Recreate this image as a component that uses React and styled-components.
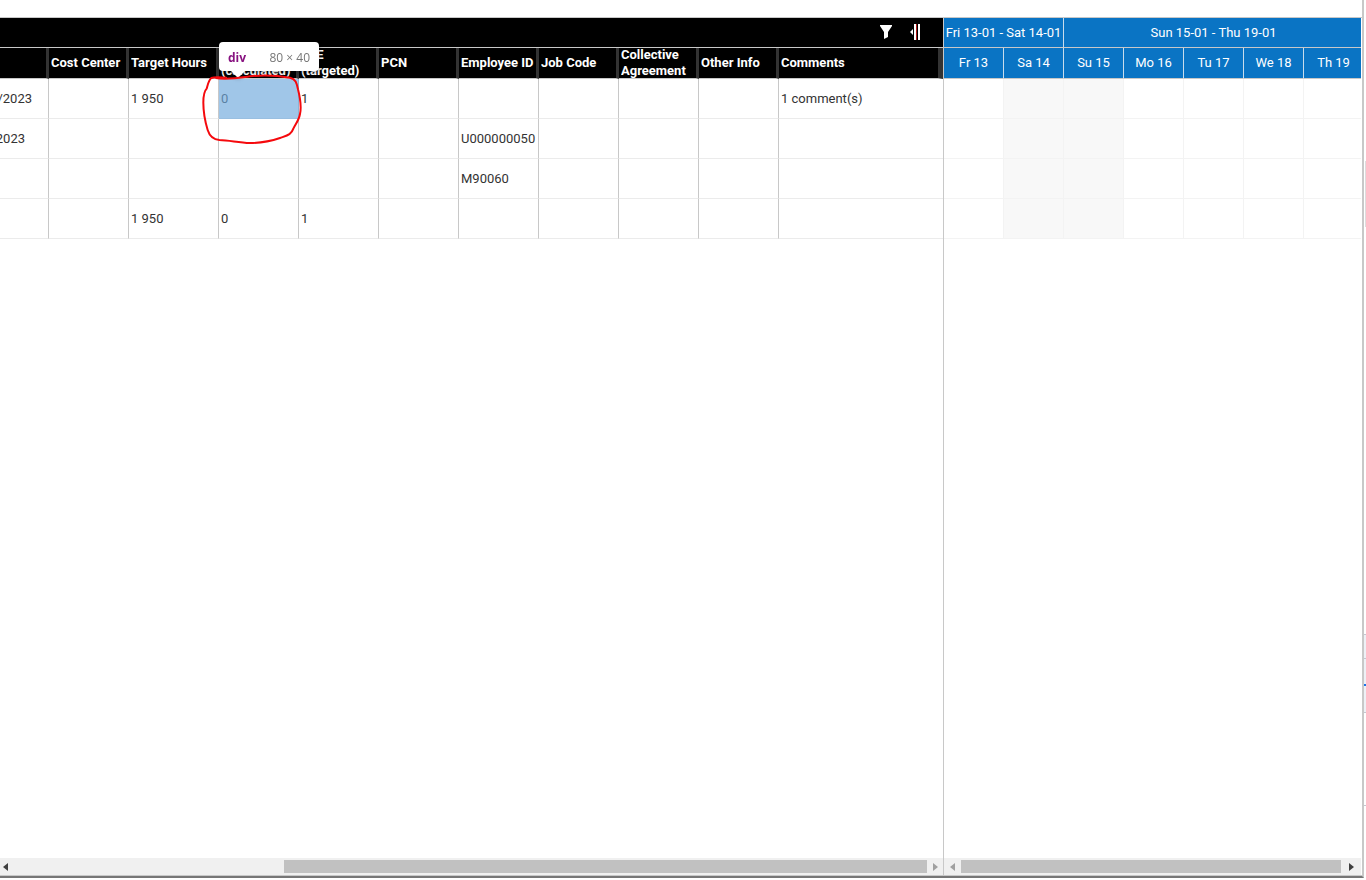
import styled, { createGlobalStyle } from 'styled-components';

const GlobalStyle = createGlobalStyle`
  * {
    box-sizing: border-box;
  }

  body {
    margin: 0;
    background: #fff;
    color: #333;
    font-family: Roboto, "Liberation Sans", sans-serif;
    font-size: 13px;
    line-height: 16px;
  }
`;

const Page = styled.div`
  display: flex;
  height: 100vh;
  padding-bottom: 2px;
  overflow: hidden;
`;

const Main = styled.main`
  flex: 1;
  min-width: 0;
  display: flex;
  flex-direction: column;
  border-right: 2px solid #c8c8c8;
  border-bottom: 2px solid #767676;
`;

const TopGap = styled.div`
  flex: none;
  height: 18px;
  border-bottom: 1px solid #c8c8c8;
`;

const Panes = styled.div`
  flex: 1;
  min-height: 0;
  display: flex;
  padding-right: 1px;
  border-bottom: 1px solid #c8c8c8;
`;

const Pane = styled.section`
  flex: ${({ $width }) => ($width ? `0 0 ${$width}px` : '1')};
  min-width: 0;
  display: flex;
  flex-direction: column;
  overflow: hidden;
  border-right: ${({ $width }) => ($width ? '1px solid #c8c8c8' : 'none')};
`;

const PaneBody = styled.div`
  flex: 1;
  min-height: 0;
`;

const Toolbar = styled.div`
  flex: none;
  display: flex;
  align-items: center;
  justify-content: flex-end;
  gap: 16px;
  height: 30px;
  padding: 0 22px 1px 0;
  background: #000;
  border-bottom: 1px solid #c8c8c8;
`;

const IconButton = styled.button`
  display: flex;
  padding: 0;
  border: none;
  background: none;
  cursor: pointer;
`;

const Table = styled.table`
  width: ${({ $width }) => $width || '100%'};
  table-layout: fixed;
  border-collapse: separate;
  border-spacing: 0;
`;

const HeadCell = styled.th`
  height: 31px;
  padding: 0 0 0 2px;
  background: #000;
  border-right: ${({ $last }) => ($last ? 5 : 3)}px solid #333;
  border-bottom: 1px solid #c8c8c8;
  color: #fff;
  font-weight: 700;
  text-align: left;
`;

const HeadText = styled.div`
  display: flex;
  flex-direction: column;
  justify-content: center;
  height: 30px;
  overflow: hidden;
  white-space: nowrap;

  span {
    flex: none;
  }
`;

const Cell = styled.td`
  position: relative;
  height: 40px;
  padding: 0 0 0 2px;
  border-right: ${({ $last }) => ($last ? 'none' : '1px solid #c8c8c8')};
  border-bottom: 1px solid #ebebeb;
  white-space: nowrap;
`;

const EndText = styled.div`
  display: flex;
  justify-content: flex-end;
  width: ${({ $width }) => $width}px;
  margin-left: -2px;
  overflow: hidden;
`;

const Highlight = styled.div`
  position: absolute;
  top: 0;
  left: 0;
  width: 80px;
  height: 40px;
  background: rgba(111, 168, 220, 0.66);
`;

const SizeTip = styled.div`
  position: absolute;
  bottom: 47px;
  left: 0;
  display: flex;
  align-items: center;
  justify-content: space-between;
  width: 100px;
  height: 29px;
  padding: 2px 9px 0;
  border-radius: 4px;
  background: #fff;
  color: #777;
  font-family: "Open Sans", sans-serif;
  font-size: 12px;
  filter: drop-shadow(0 1px 2px rgba(0, 0, 0, 0.35));

  strong {
    color: #881280;
  }

  &::after {
    content: '';
    position: absolute;
    top: 29px;
    left: 12px;
    border: 7px solid transparent;
    border-top-color: #fff;
    border-bottom: none;
  }
`;

const Scribble = styled.svg`
  position: absolute;
  top: -5px;
  left: -17px;
  z-index: 1;
`;

const RangeCell = styled.th`
  height: 30px;
  padding: 0;
  overflow: hidden;
  background: #0a74c4;
  border-right: 1px solid #c8dcec;
  border-bottom: 1px solid #c8c8c8;
  color: #fff;
  font-weight: 400;
  white-space: nowrap;
`;

const DayCell = styled(RangeCell)`
  height: 31px;
`;

const SlotCell = styled.td`
  height: 40px;
  padding: 0;
  background: ${({ $weekend }) => ($weekend ? '#f8f8f8' : '#fff')};
  border-right: 1px solid #f3f3f3;
  border-bottom: 1px solid #f3f3f3;
`;

const ScrollBar = styled.div`
  flex: none;
  display: flex;
  height: 17px;
  background: #f0f0f0;
`;

const ScrollButton = styled.button`
  flex: none;
  display: flex;
  align-items: center;
  justify-content: center;
  width: ${({ $width }) => $width || 17}px;
  padding: 0;
  border: none;
  background: none;
  color: ${({ $muted }) => ($muted ? '#a0a0a0' : '#404040')};
`;

const Track = styled.div`
  flex: 1;
  display: flex;
  justify-content: flex-end;
  padding: 2px 0;
`;

const Thumb = styled.div`
  width: ${({ $size }) => $size};
  background: #c1c1c1;
`;

const Edge = styled.aside`
  flex: none;
  width: 2px;
  display: flex;
  flex-direction: column;
`;

const EdgePart = styled.div`
  flex: none;
  height: ${({ $height }) => $height}px;
  background: ${({ $fill }) => $fill || '#fff'};
  border-right: ${({ $side }) => ($side ? '1px solid #ddd' : 'none')};
  border-bottom: ${({ $line }) => ($line ? '1px solid #c4c7d0' : 'none')};
`;

const columns = [
  { width: 49, title: [] },
  { width: 80, title: ['Cost Center'] },
  { width: 90, title: ['Target Hours'] },
  { width: 80, title: ['FTE', '(calculated)'] },
  { width: 80, title: ['FTE', '(targeted)'] },
  { width: 80, title: ['PCN'] },
  { width: 80, title: ['Employee ID'] },
  { width: 80, title: ['Job Code'] },
  { width: 80, title: ['Collective', 'Agreement'] },
  { width: 80, title: ['Other Info'] },
  { width: 164, title: ['Comments'] },
];

const rows = [
  ['/2023', '', '1 950', '0', '1', '', '', '', '', '', '1 comment(s)'],
  ['2023', '', '', '', '', '', 'U000000050', '', '', '', ''],
  ['', '', '', '', '', '', 'M90060', '', '', '', ''],
  ['', '', '1 950', '0', '1', '', '', '', '', '', ''],
];

// visible width of the date column text, which is scrolled off to the left
const dateWidths = [32, 25, 0, 0];

const days = ['Fr 13', 'Sa 14', 'Su 15', 'Mo 16', 'Tu 17', 'We 18', 'Th 19'];

const FilterIcon = () => (
  <svg width="14" height="16" viewBox="0 0 14 16" aria-hidden="true">
    <path d="M1 1h12v1L9 8v5l-4 2V8L1 2z" fill="#fff" />
  </svg>
);

const CollapseIcon = () => (
  <svg width="12" height="18" viewBox="0 0 12 18" aria-hidden="true">
    <path d="M4 6v6L1 9z" fill="#fff" />
    <path d="M5 1h2v16H5zM9 1h2v16H9z" fill="#fff" />
    <path d="M7 1h1v16H7z" fill="#b01818" />
  </svg>
);

const Arrow = ({ left }) => (
  <svg width="5" height="8" viewBox="0 0 5 8" aria-hidden="true">
    <path d={left ? 'M5 0v8L0 4z' : 'M0 0v8l5-4z'} fill="currentColor" />
  </svg>
);

const Inspected = () => (
  <>
    <Highlight />
    <SizeTip>
      <strong>div</strong>
      <span>80 × 40</span>
    </SizeTip>
    <Scribble width="100" height="72" viewBox="36 192 300 216" aria-hidden="true">
      <path
        d="M78 204C110 210 145 204 180 199C220 195 270 198 300 203C318 207 320 220 324 238C330 262 335 290 330 312C327 330 318 340 310 356C304 374 292 376 270 384C235 396 210 399 180 399C145 398 120 391 88 390C66 388 58 376 53 360C44 330 40 300 40 278C40 255 42 244 50 236C54 222 56 210 64 204C74 200 90 201 108 203"
        fill="none"
        stroke="#f5090d"
        strokeWidth="6"
        strokeLinecap="round"
        strokeLinejoin="round"
      />
    </Scribble>
  </>
);

const ResourceGrid = () => (
  <Table>
    <colgroup>
      {columns.map((col, i) => (
        <col key={i} width={col.width} />
      ))}
    </colgroup>
    <thead>
      <tr>
        {columns.map((col, i) => (
          <HeadCell key={i} $last={i === columns.length - 1}>
            <HeadText>
              {col.title.map((line) => (
                <span key={line}>{line}</span>
              ))}
            </HeadText>
          </HeadCell>
        ))}
      </tr>
    </thead>
    <tbody>
      {rows.map((row, r) => (
        <tr key={r}>
          {row.map((text, c) => (
            <Cell key={c} $last={c === row.length - 1}>
              {c === 0 ? <EndText $width={dateWidths[r]}>{text}</EndText> : text}
              {r === 0 && c === 3 && <Inspected />}
            </Cell>
          ))}
        </tr>
      ))}
    </tbody>
  </Table>
);

const Timeline = () => (
  <Table $width="420px">
    <colgroup>
      {days.map((day) => (
        <col key={day} width={60} />
      ))}
    </colgroup>
    <thead>
      <tr>
        <RangeCell colSpan={2}>Fri 13-01 - Sat 14-01</RangeCell>
        <RangeCell colSpan={5}>Sun 15-01 - Thu 19-01</RangeCell>
      </tr>
      <tr>
        {days.map((day) => (
          <DayCell key={day}>{day}</DayCell>
        ))}
      </tr>
    </thead>
    <tbody>
      {rows.map((row, r) => (
        <tr key={r}>
          {days.map((day, i) => (
            <SlotCell key={day} $weekend={i === 1 || i === 2} />
          ))}
        </tr>
      ))}
    </tbody>
  </Table>
);

const App = () => {
  return (
    <>
      <GlobalStyle />
      <Page>
        <Main>
          <TopGap />
          <Panes>
            <Pane $width={944}>
              <Toolbar>
                <IconButton type="button" aria-label="Filter">
                  <FilterIcon />
                </IconButton>
                <IconButton type="button" aria-label="Collapse columns">
                  <CollapseIcon />
                </IconButton>
              </Toolbar>
              <PaneBody>
                <ResourceGrid />
              </PaneBody>
              <ScrollBar>
                <ScrollButton type="button" aria-label="Scroll left" $width={10}>
                  <Arrow left />
                </ScrollButton>
                <Track>
                  <Thumb $size="643px" />
                </Track>
                <ScrollButton type="button" aria-label="Scroll right" $width={16} $muted>
                  <Arrow />
                </ScrollButton>
              </ScrollBar>
            </Pane>
            <Pane>
              <PaneBody>
                <Timeline />
              </PaneBody>
              <ScrollBar>
                <ScrollButton type="button" aria-label="Scroll left" $muted>
                  <Arrow left />
                </ScrollButton>
                <Track>
                  <Thumb $size="100%" />
                </Track>
                <ScrollButton type="button" aria-label="Scroll right" $width={20}>
                  <Arrow />
                </ScrollButton>
              </ScrollBar>
            </Pane>
          </Panes>
        </Main>
        <Edge>
          <EdgePart $height={161} />
          <EdgePart $height={66} $side />
          <EdgePart $height={408} $line />
          <EdgePart $height={24} $fill="#eef1f6" $line />
          <EdgePart $height={25} $fill="#eef1f6" />
          <EdgePart $height={2} $fill="#1a73e8" />
          <EdgePart $height={27} $fill="#eef1f6" $line />
          <EdgePart $height={93} $line />
        </Edge>
      </Page>
    </>
  );
};

export default App;
